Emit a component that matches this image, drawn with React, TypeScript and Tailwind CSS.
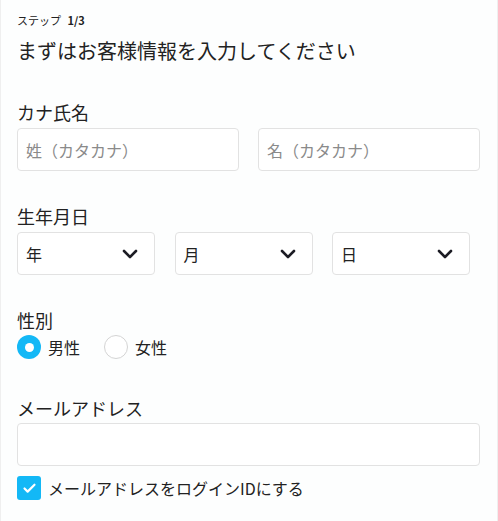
import React from "react";
import { ChevronDown, Check } from "lucide-react";

function Label({ children }: { children: React.ReactNode }) {
  return <p className="text-[18px] leading-6 text-[#222]">{children}</p>;
}

function TextInput({ placeholder }: { placeholder?: string }) {
  return (
    <input
      className="h-[43px] w-full min-w-0 rounded-[4px] border border-[#e2e2e2] bg-white px-2 text-[16px] text-[#222] placeholder:text-[#8a8a8a] outline-none"
      placeholder={placeholder}
    />
  );
}

function Select({ label }: { label: string }) {
  return (
    <div className="flex h-[43px] w-[138px] items-center justify-between rounded-[4px] border border-[#e2e2e2] bg-white pl-2 pr-[12px]">
      <span className="text-[16px] text-[#222]">{label}</span>
      <ChevronDown size={24} strokeWidth={2.6} className="text-[#1c1c24]" />
    </div>
  );
}

function Radio({ label, checked }: { label: string; checked?: boolean }) {
  return (
    <label className="flex items-center gap-[7px]">
      {checked ? (
        <span className="flex h-6 w-6 items-center justify-center rounded-full bg-[#13b8f6]">
          <span className="h-[9px] w-[9px] rounded-full bg-white" />
        </span>
      ) : (
        <span className="h-6 w-6 rounded-full border border-[#d4d4d4] bg-white" />
      )}
      <span className="text-[16px] text-[#222]">{label}</span>
    </label>
  );
}

export default function App() {
  return (
    <div
      className="min-h-[521px] w-[498px] border-x border-[#efefef] bg-[#fdfefe] px-4 pt-3"
      style={{ fontFamily: '"Noto Sans CJK JP", "Noto Sans", sans-serif' }}
    >
      <p className="text-[11px] leading-4 text-[#222]">
        ステップ <span className="ml-1 font-bold">1/3</span>
      </p>
      <h1 className="mt-[9px] text-[20px] leading-7 text-[#222]">
        まずはお客様情報を入力してください
      </h1>

      <div className="mt-[35px]">
        <Label>カナ氏名</Label>
        <div className="mt-1 flex gap-[19px] pr-[1px]">
          <TextInput placeholder="姓（カタカナ）" />
          <TextInput placeholder="名（カタカナ）" />
        </div>
      </div>

      <div className="mt-[33px]">
        <Label>生年月日</Label>
        <div className="mt-1 flex gap-[19.5px]">
          <Select label="年" />
          <Select label="月" />
          <Select label="日" />
        </div>
      </div>

      <div className="mt-[33px]">
        <Label>性別</Label>
        <div className="mt-[3px] flex gap-[24px]">
          <Radio label="男性" checked />
          <Radio label="女性" />
        </div>
      </div>

      <div className="mt-[37px]">
        <Label>メールアドレス</Label>
        <div className="mt-[3px] pr-[1px]">
          <TextInput />
        </div>
        <label className="mt-[10px] flex items-center gap-[7px]">
          <span className="flex h-6 w-6 items-center justify-center rounded-[3px] bg-[#13b8f6]">
            <Check size={15} strokeWidth={3.5} className="text-white" />
          </span>
          <span className="text-[16px] text-[#222]">メールアドレスをログインIDにする</span>
        </label>
      </div>
    </div>
  );
}
